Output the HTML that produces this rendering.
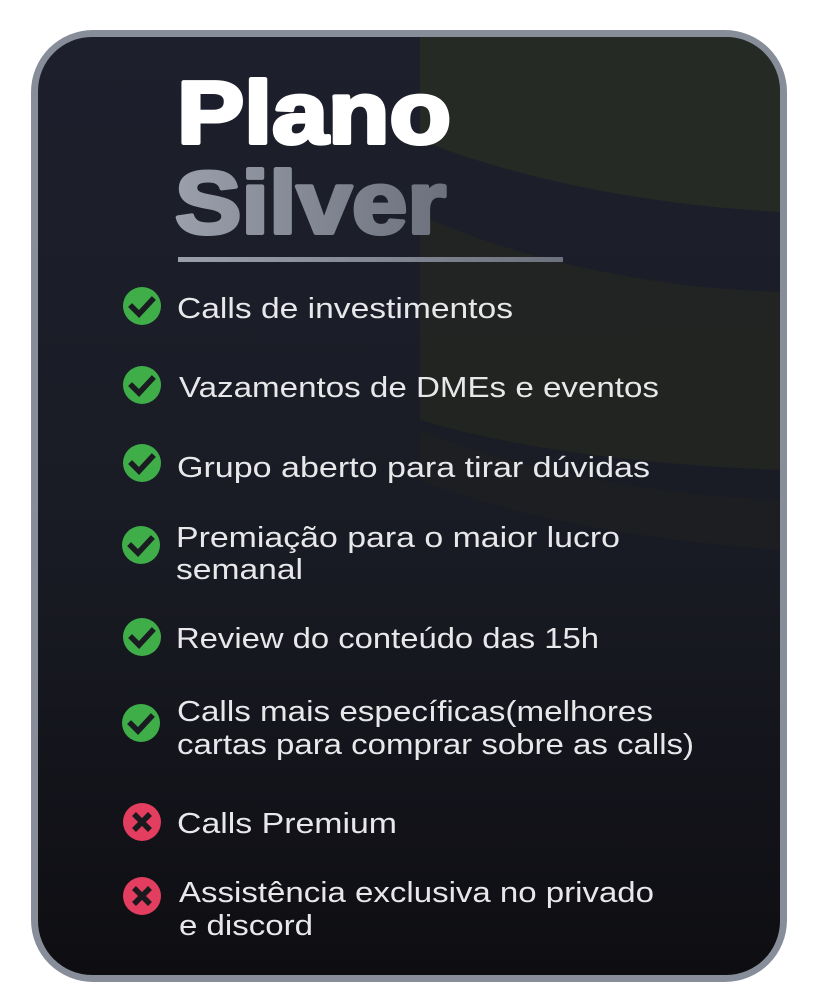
<!DOCTYPE html>
<html><head><meta charset="utf-8"><style>
html,body{margin:0;padding:0;background:#fff;width:819px;height:1000px;overflow:hidden}
svg{display:block}
</style></head><body>
<svg width="819" height="1000" viewBox="0 0 819 1000" xmlns="http://www.w3.org/2000/svg">
<defs>
<linearGradient id="bg" x1="0" y1="0" x2="0" y2="1">
<stop offset="0" stop-color="#1d1f2c"/><stop offset="0.55" stop-color="#191b24"/><stop offset="1" stop-color="#0e0e12"/>
</linearGradient>
<linearGradient id="sv" x1="0" y1="0" x2="1" y2="0">
<stop offset="0" stop-color="#9a9fab"/><stop offset="1" stop-color="#6c717d"/>
</linearGradient>
<clipPath id="card"><rect x="38" y="37" width="742" height="938" rx="54"/></clipPath>
</defs>
<rect x="31" y="30" width="756" height="952" rx="62" fill="#878d99"/>
<rect x="38" y="37" width="742" height="938" rx="54" fill="url(#bg)"/>
<g clip-path="url(#card)">
<path d="M420 37 H780 V212 C650 205 520 180 420 140 Z" fill="#252a25"/>
<path d="M420 215 C520 260 650 288 780 292 V470 C650 465 520 450 420 420 Z" fill="#222621" opacity="0.9"/>
<path d="M420 430 C520 470 650 495 780 500 V550 C650 540 520 520 420 480 Z" fill="#1f221f" opacity="0.5"/>
</g>
<text x="177" y="143" font-family="Liberation Sans, sans-serif" font-weight="bold" font-size="88" fill="#fff" stroke="#fff" stroke-width="4" stroke-linejoin="round" textLength="274" lengthAdjust="spacingAndGlyphs">Plano</text>
<text x="175" y="233" font-family="Liberation Sans, sans-serif" font-weight="bold" font-size="88" fill="url(#sv)" stroke="url(#sv)" stroke-width="4" stroke-linejoin="round" textLength="271" lengthAdjust="spacingAndGlyphs">Silver</text>
<rect x="178" y="257" width="385" height="5" fill="url(#sv)"/>
<g font-family="Liberation Sans, sans-serif" font-size="29" fill="#e8e8ea">
<text x="177" y="318" textLength="336" lengthAdjust="spacingAndGlyphs">Calls de investimentos</text>
<text x="179" y="397" textLength="480" lengthAdjust="spacingAndGlyphs">Vazamentos de DMEs e eventos</text>
<text x="177" y="477" textLength="473" lengthAdjust="spacingAndGlyphs">Grupo aberto para tirar dúvidas</text>
<text x="176" y="547" textLength="444" lengthAdjust="spacingAndGlyphs">Premiação para o maior lucro</text>
<text x="176" y="579" textLength="127" lengthAdjust="spacingAndGlyphs">semanal</text>
<text x="176" y="648" textLength="423" lengthAdjust="spacingAndGlyphs">Review do conteúdo das 15h</text>
<text x="177" y="721" textLength="476" lengthAdjust="spacingAndGlyphs">Calls mais específicas(melhores</text>
<text x="177" y="754" textLength="517" lengthAdjust="spacingAndGlyphs">cartas para comprar sobre as calls)</text>
<text x="177" y="833" textLength="220" lengthAdjust="spacingAndGlyphs">Calls Premium</text>
<text x="179" y="902" textLength="475" lengthAdjust="spacingAndGlyphs">Assistência exclusiva no privado</text>
<text x="179" y="935" textLength="134" lengthAdjust="spacingAndGlyphs">e discord</text>
</g>
<g id="ok">
<circle cx="142" cy="306" r="19" fill="#3fae49"/>
<path d="M132 307 L139 314 L152 300" fill="none" stroke="#1a1c22" stroke-width="5.5" stroke-linecap="square"/>
</g>
<use href="#ok" transform="translate(0,79)"/>
<use href="#ok" transform="translate(0,157)"/>
<use href="#ok" transform="translate(-1,239)"/>
<use href="#ok" transform="translate(0,331)"/>
<use href="#ok" transform="translate(-1,417)"/>
<g id="no">
<circle cx="142" cy="822" r="19" fill="#e33d5f"/>
<path d="M134 814 L150 830 M150 814 L134 830" stroke="#1a1a1e" stroke-width="5.5"/>
</g>
<use href="#no" transform="translate(0,74)"/>
</svg>
</body></html>
